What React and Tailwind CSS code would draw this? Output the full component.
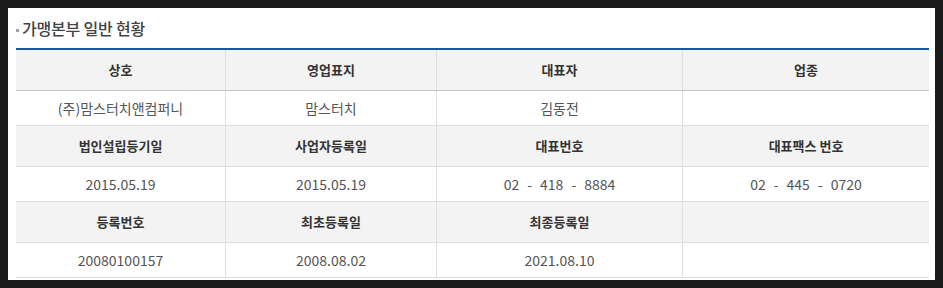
import React from 'react';

const rows = [
  {
    head: ['상호', '영업표지', '대표자', '업종'],
    data: ['(주)맘스터치앤컴퍼니', '맘스터치', '김동전', ''],
  },
  {
    head: ['법인설립등기일', '사업자등록일', '대표번호', '대표팩스 번호'],
    data: ['2015.05.19', '2015.05.19', '02-418-8884', '02-445-0720'],
  },
  {
    head: ['등록번호', '최초등록일', '최종등록일', ''],
    data: ['20080100157', '2008.08.02', '2021.08.10', ''],
  },
];

// phone numbers are drawn with wide gaps around the dashes
const renderValue = (d) => {
  if (/^\d+-\d+-\d+$/.test(d)) {
    const parts = d.split('-');
    return (
      <span>
        {parts[0]}
        <span className="mx-[8px]">-</span>
        {parts[1]}
        <span className="mx-[8px]">-</span>
        {parts[2]}
      </span>
    );
  }
  return d;
};

const App = () => {
  return (
    <div
      className="w-[943px] h-[288px] bg-[#1b1b1b] p-2 overflow-hidden"
      style={{ fontFamily: '"Noto Sans CJK KR", "Noto Sans", sans-serif' }}
    >
      <div className="w-[927px] h-[272px] bg-white pl-2 pr-1.5">
        {/* Title */}
        <div className="h-10 flex items-center">
          <span className="w-[3px] h-[3px] bg-[#a0a0a0] mr-[3px] mt-1"></span>
          <h2 className="text-[16px] font-medium text-[#444] tracking-[-0.2px]">가맹본부 일반 현황</h2>
        </div>

        {/* Table */}
        <div className="border-t-2 border-[#1c559c] grid grid-cols-[210px_211px_246px_246px] text-center">
          {rows.map((row, i) => (
            <React.Fragment key={i}>
              {row.head.map((h, j) => (
                <div
                  key={'h' + j}
                  className={`h-[41px] flex items-center justify-center bg-[#f3f3f3] text-[13px] font-bold text-[#333] border-b ${
                    i === 0 ? 'border-[#c4c4c4]' : 'border-[#dedede]'
                  } ${j < 3 ? 'border-r border-r-[#dedede]' : ''}`}
                >
                  {h}
                </div>
              ))}
              {row.data.map((d, j) => (
                <div
                  key={'d' + j}
                  className={`h-[35px] flex items-center justify-center bg-white text-[14px] text-[#555] border-b border-[#dedede] ${
                    j < 3 ? 'border-r' : ''
                  }`}
                >
                  {renderValue(d)}
                </div>
              ))}
            </React.Fragment>
          ))}
        </div>
      </div>
    </div>
  );
};

export default App;
